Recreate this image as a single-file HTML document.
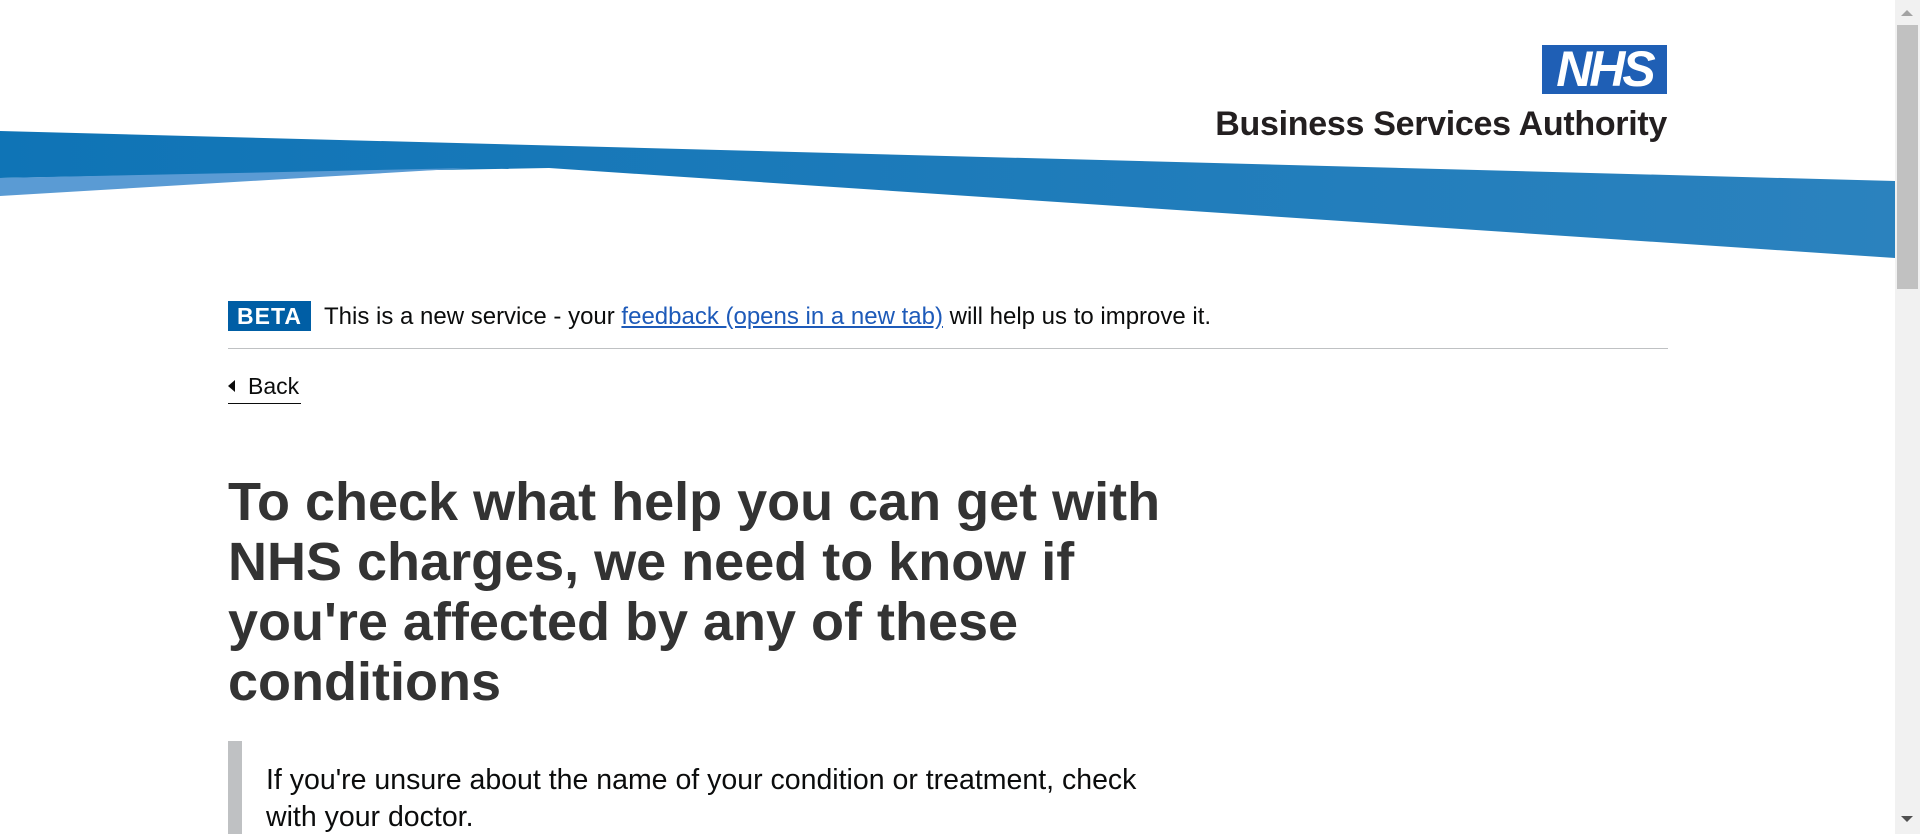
<!DOCTYPE html>
<html><head><meta charset="utf-8"><style>
html,body{margin:0;padding:0;width:1920px;height:834px;overflow:hidden;background:#fff;font-family:"Liberation Sans",Arial,sans-serif;}
.abs{position:absolute}
</style></head><body>
<svg class="abs" style="left:0;top:0" width="1895" height="270">
<defs><linearGradient id="g" x1="0" x2="1"><stop offset="0" stop-color="#0f74b6"/><stop offset="1" stop-color="#2b82be"/></linearGradient></defs>
<polygon points="0,131 1895,181 1895,258 549,168 0,178" fill="url(#g)"/>
<polygon points="0,178 470,168 0,196" fill="#5a9bd4"/>
</svg>
<div class="abs" style="left:1542px;top:45px;width:125px;height:49px;background:#1f5fb5;color:#fff;font-weight:bold;font-style:italic;font-size:50px;line-height:49px;text-align:center;letter-spacing:-3px;">NHS</div>
<div class="abs" style="left:1150px;top:104px;width:517px;text-align:right;font-size:34px;line-height:40px;font-weight:bold;color:#231f20;letter-spacing:-0.3px;">Business Services Authority</div>
<div class="abs" style="left:228px;top:301px;width:83px;height:30px;background:#005ea5;color:#fff;font-weight:bold;font-size:23px;line-height:30px;text-align:center;letter-spacing:1px;">BETA</div>
<div class="abs" style="left:324px;top:302px;font-size:24px;line-height:30px;color:#0b0c0c;">This is a new service - your <span style="color:#1d5ab9;text-decoration:underline;">feedback (opens in a new tab)</span> will help us to improve it.</div>
<div class="abs" style="left:228px;top:348px;width:1440px;height:1px;background:#bfc1c3"></div>
<div class="abs" style="left:228px;top:372px;width:73px;height:31px;border-bottom:1px solid #0b0c0c;font-size:23px;line-height:28px;color:#0b0c0c;">
<span style="display:inline-block;width:0;height:0;border-top:6px solid transparent;border-bottom:6px solid transparent;border-right:7px solid #0b0c0c;margin-right:13px;vertical-align:2px"></span>Back</div>
<div class="abs" style="left:228px;top:472px;width:1100px;font-size:54px;line-height:60px;font-weight:bold;color:#333;">To check what help you can get with<br>NHS charges, we need to know if<br>you're affected by any of these<br>conditions</div>
<div class="abs" style="left:228px;top:741px;width:14px;height:93px;background:#bfc1c3"></div>
<div class="abs" style="left:266px;top:762px;font-size:28.5px;line-height:37px;color:#0b0c0c;white-space:nowrap;">If you're unsure about the name of your condition or treatment, check<br>with your doctor.</div>
<div class="abs" style="left:1895px;top:0;width:25px;height:834px;background:#f1f1f1"></div>
<div class="abs" style="left:1897px;top:25px;width:21px;height:264px;background:#c1c1c1"></div>
<div class="abs" style="left:1901px;top:10px;width:0;height:0;border-left:6px solid transparent;border-right:6px solid transparent;border-bottom:6px solid #a3a3a3"></div>
<div class="abs" style="left:1901px;top:816px;width:0;height:0;border-left:6px solid transparent;border-right:6px solid transparent;border-top:6px solid #505050"></div>
</body></html>
